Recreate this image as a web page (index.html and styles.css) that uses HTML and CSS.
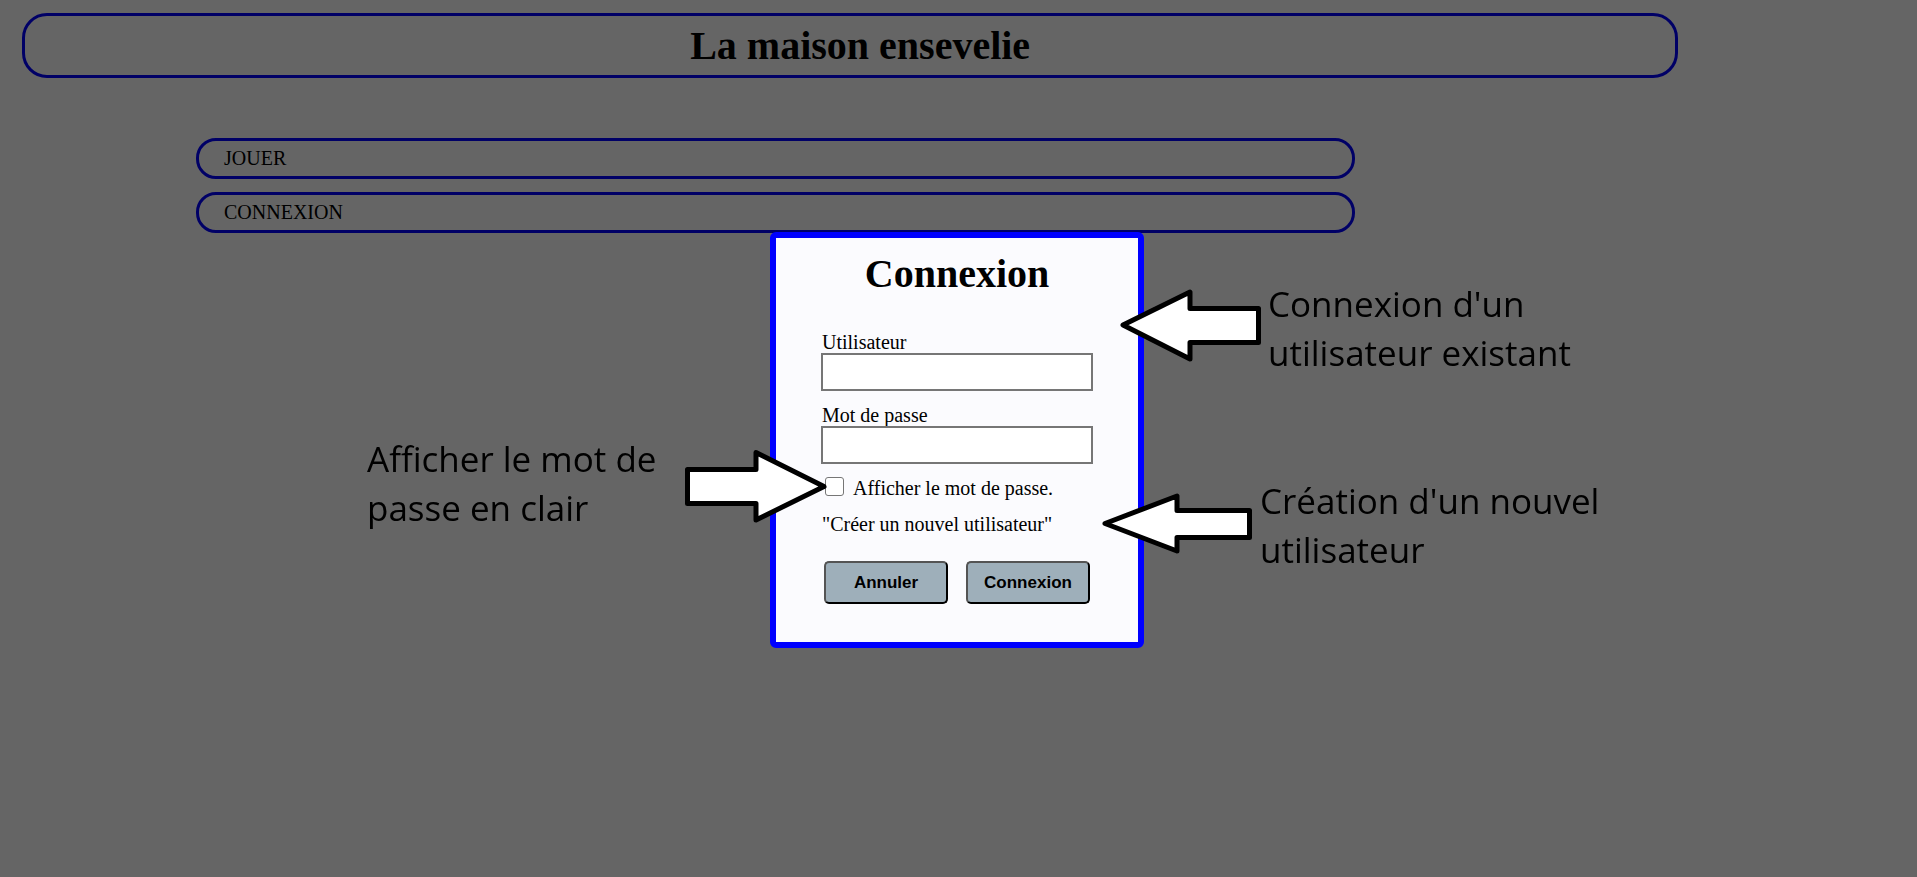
FILE: index.html
```html
<!DOCTYPE html>
<html lang="fr">
<head>
<meta charset="utf-8">
<title>La maison ensevelie</title>
<link rel="stylesheet" href="styles.css">
</head>
<body>
<div class="page">
  <header class="banner"><h1>La maison ensevelie</h1></header>
  <nav class="menu">
    <a class="menu-item" href="#jouer">JOUER</a>
    <a class="menu-item" href="#connexion">CONNEXION</a>
  </nav>
</div>

<div class="overlay">
  <div class="dialog" role="dialog" aria-labelledby="dialog-title">
    <h2 class="dialog-title" id="dialog-title">Connexion</h2>
    <form class="login">
      <div class="field">
        <label for="user">Utilisateur</label>
        <input type="text" id="user">
      </div>
      <div class="field">
        <label for="password">Mot de passe</label>
        <input type="password" id="password">
      </div>
      <div class="check">
        <input type="checkbox" id="show">
        <label for="show">Afficher le mot de passe.</label>
      </div>
      <a class="create" href="#creer">"Créer un nouvel utilisateur"</a>
      <div class="actions">
        <button type="button">Annuler</button>
        <button type="submit">Connexion</button>
      </div>
    </form>

    <div class="note note-login">
      <svg class="arrow" width="142" height="98" viewBox="0 0 142 98" aria-hidden="true"><path d="M3 47L70 14V30.500H138.500V64.500H70V81Z"/></svg>
      <p>Connexion d'un<br>utilisateur existant</p>
    </div>
    <div class="note note-create">
      <svg class="arrow" width="152" height="98" viewBox="0 0 152 98" aria-hidden="true"><path d="M3 48.500L75 21V35.500H147.500V62.500H75V76Z"/></svg>
      <p>Création d'un nouvel<br>utilisateur</p>
    </div>
    <div class="note note-show">
      <p>Afficher le mot de<br>passe en clair</p>
      <svg class="arrow" width="144" height="98" viewBox="0 0 144 98" aria-hidden="true"><path d="M140 53.500L72 19.500V36.500H3.500V70.500H72V87Z"/></svg>
    </div>
  </div>
</div>
</body>
</html>
```
FILE: styles.css
```css
* {
  box-sizing: border-box;
}

body {
  margin: 0;
  background: #fdfdfd;
  color: #000;
  font-family: "Liberation Serif", "Times New Roman", serif;
  font-size: 20px;
  line-height: 22px;
}

a {
  color: inherit;
  text-decoration: none;
}

h1,
h2,
p {
  margin: 0;
}

h1,
h2 {
  font-size: 40px;
  line-height: 46px;
  text-align: center;
}

.page {
  width: 86.4%;
  margin: 13px 0 0 22px;
}

.banner {
  padding: 7px 0 6px 20px;
  border: 3px solid #00f;
  border-radius: 25px;
}

.menu {
  display: flex;
  flex-direction: column;
  gap: 13px;
  width: 70%;
  margin: 60px 0 0 174px;
}

.menu-item {
  padding: 6px 25px 7px;
  border: 3px solid #00f;
  border-radius: 20px;
}

.overlay {
  position: fixed;
  inset: 0;
  display: flex;
  justify-content: center;
  align-items: flex-start;
  padding: 232px 3px 0 0;
  background: rgba(0, 0, 0, 0.6);
}

.dialog {
  position: relative;
  width: 374px;
  padding: 13px 45px 38px;
  border: 6px solid #00f;
  border-radius: 6px;
  background: #fbfbfe;
}

.login {
  display: flex;
  flex-direction: column;
  gap: 13px;
  margin-top: 34px;
}

.field {
  display: flex;
  flex-direction: column;
}

.field label,
.create {
  padding-left: 1px;
}

.field input {
  height: 38px;
  padding: 0 8px;
  border: 2px solid #767676;
  border-radius: 0;
  background: #fff;
  font: inherit;
}

.check {
  display: flex;
  align-items: flex-start;
  gap: 9px;
}

.check input {
  appearance: none;
  width: 19px;
  height: 19px;
  margin: 0 0 0 4px;
  border: 1px solid #767676;
  border-radius: 3px;
  background: #fff;
}

.create {
  margin-top: 1px;
}

.actions {
  display: flex;
  justify-content: center;
  gap: 18px;
  margin-top: 13px;
}

.actions button {
  width: 124px;
  height: 43px;
  padding: 0;
  border: 2px outset #000;
  border-radius: 5px;
  background: #9eafba;
  color: #000;
  font: bold 17px "Liberation Sans", Arial, sans-serif;
}

.note {
  position: absolute;
  display: flex;
  gap: 6px;
  font-family: "Open Sans", sans-serif;
  font-size: 35px;
  line-height: 49px;
  white-space: nowrap;
}

.note p {
  padding-top: 1px;
}

.note-login {
  top: 40px;
  left: 344px;
}

.note-create {
  top: 237px;
  left: 326px;
}

.note-show {
  top: 195px;
  left: -409px;
}

.note-show p {
  width: 311px;
}

.arrow {
  flex: none;
  fill: #fff;
  stroke: #000;
  stroke-width: 5px;
  stroke-linejoin: round;
}
```
